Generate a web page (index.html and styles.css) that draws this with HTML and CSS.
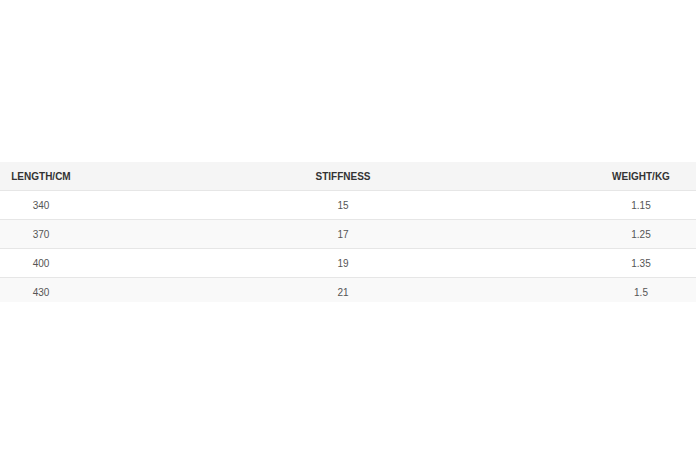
FILE: index.html
```html
<!DOCTYPE html>
<html>
<head>
<meta charset="utf-8">
<link rel="stylesheet" href="styles.css">
</head>
<body>
<div class="wrap">
  <table class="spec">
    <colgroup>
      <col class="c1"><col class="c2"><col class="c3"><col class="c4">
    </colgroup>
    <thead>
      <tr><th>LENGTH/CM</th><th>STIFFNESS</th><th>WEIGHT/KG</th><th></th></tr>
    </thead>
    <tbody>
      <tr><td>340</td><td>15</td><td>1.15</td><td></td></tr>
      <tr><td>370</td><td>17</td><td>1.25</td><td></td></tr>
      <tr><td>400</td><td>19</td><td>1.35</td><td></td></tr>
      <tr><td>430</td><td>21</td><td>1.5</td><td></td></tr>
    </tbody>
  </table>
</div>
</body>
</html>
```
FILE: styles.css
```css
html, body {
  margin: 0;
  padding: 0;
  background: #fff;
}
body {
  font-family: "Liberation Sans", Arial, sans-serif;
}
.wrap {
  margin-top: 162px;
  height: 140px;
  overflow: hidden;
}
.spec {
  width: 696px;
  border-collapse: collapse;
  table-layout: fixed;
}
.c1 { width: 82px; }
.c2 { width: 522px; }
.c3 { width: 74px; }
.c4 { width: 18px; }
.spec th {
  height: 28px;
  padding: 0;
  background: #f5f5f5;
  color: #333;
  font-size: 10px;
  font-weight: bold;
  text-align: center;
  white-space: nowrap;
  border-bottom: 1px solid #e6e6e6;
}
.spec td {
  height: 28px;
  padding: 0;
  color: #555;
  font-size: 10px;
  text-align: center;
  border-bottom: 1px solid #e6e6e6;
}
.spec tbody tr:nth-child(even) td {
  background: #f9f9f9;
}
```
